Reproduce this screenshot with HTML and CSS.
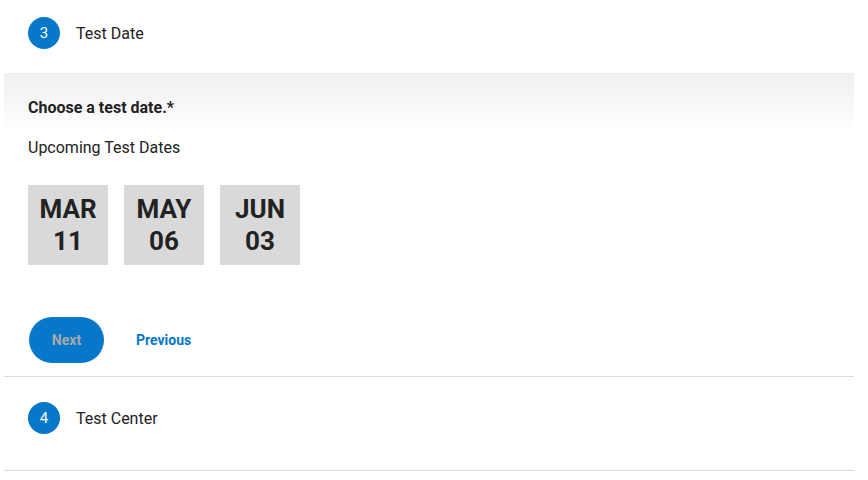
FILE: index.html
```html
<!DOCTYPE html>
<html lang="en">

<head>
  <meta charset="UTF-8" />
  <title>Register | Test Date</title>
  <link rel="stylesheet" href="styles.css">
</head>

<body>
  <div class="stepper">
    <div class="step step-open">
      <div class="step-head">
        <span class="step-num">3</span>
        <span class="step-title">Test Date</span>
      </div>
      <div class="step-body">
        <p class="question">Choose a test date.*</p>
        <p class="sub">Upcoming Test Dates</p>
        <div class="dates">
          <button class="date"><span>MAR</span><span>11</span></button>
          <button class="date"><span>MAY</span><span>06</span></button>
          <button class="date"><span>JUN</span><span>03</span></button>
        </div>
        <div class="actions">
          <button class="btn-next" disabled>Next</button>
          <a href="#" class="btn-prev">Previous</a>
        </div>
      </div>
    </div>
    <div class="step step-closed">
      <div class="step-head">
        <span class="step-num">4</span>
        <span class="step-title">Test Center</span>
      </div>
    </div>
  </div>
</body>

</html>
```

FILE: styles.css
```css
body {
  margin: 0;
  font-family: Roboto, Arial, sans-serif;
  color: #222;
  background: #fff;
}

.stepper {
  margin: 0 14px 0 4px;
}

.step {
  border-bottom: 1px solid #d9d9d9;
}

.step-head {
  display: flex;
  align-items: center;
  gap: 16px;
  padding: 17px 24px 24px;
}

.step-num {
  width: 32px;
  height: 32px;
  border-radius: 50%;
  background: #0677c9;
  color: #fff;
  font-size: 15px;
  display: flex;
  align-items: center;
  justify-content: center;
}

.step-title {
  font-size: 16px;
}

.step-body {
  background: linear-gradient(#efefef 0, #fff 60px);
  padding: 25px 24px 13px;
}

.question {
  margin: 0;
  font-size: 16px;
  font-weight: bold;
  line-height: 20px;
}

.sub {
  margin: 20px 0 0;
  font-size: 16px;
  line-height: 20px;
}

.dates {
  display: flex;
  gap: 16px;
  margin-top: 27px;
}

.date {
  width: 80px;
  height: 80px;
  border: none;
  background: #d9d9d9;
  color: #222;
  font-family: inherit;
  font-size: 26px;
  font-weight: bold;
  line-height: 32px;
  display: flex;
  flex-direction: column;
  align-items: center;
  justify-content: center;
  padding: 0;
}

.actions {
  display: flex;
  align-items: center;
  gap: 32px;
  margin-top: 52px;
  padding-left: 1px;
}

.btn-next {
  width: 75px;
  height: 46px;
  border: none;
  border-radius: 23px;
  background: #0677c9;
  color: #a9a9a9;
  font-family: inherit;
  font-size: 14px;
  font-weight: bold;
}

.btn-prev {
  color: #0677c9;
  font-size: 14px;
  font-weight: bold;
  text-decoration: none;
}

.step-closed .step-head {
  padding: 25px 24px 36px;
}
```
